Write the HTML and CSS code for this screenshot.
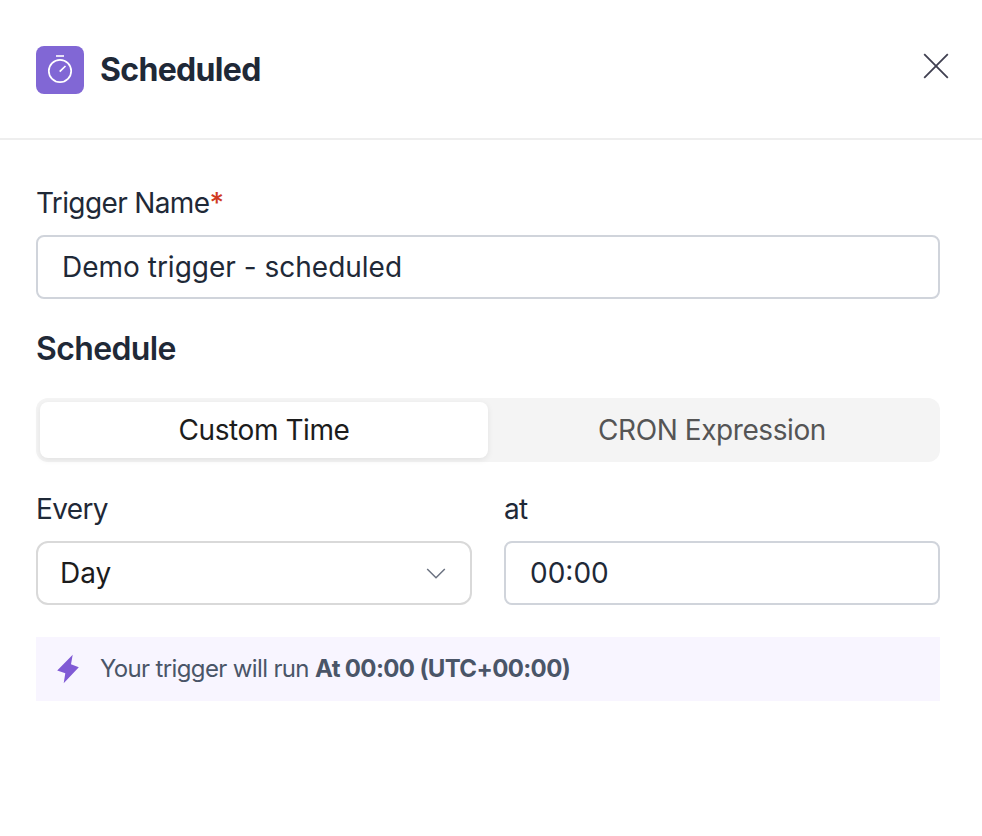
FILE: index.html
```html
<!DOCTYPE html>
<html lang="en">
<head>
    <meta charset="UTF-8">
    <meta name="viewport" content="width=device-width, initial-scale=1.0">
    <title>Scheduled</title>
    <link rel="stylesheet" href="styles.css">
</head>
<body>

    <header class="header">
        <div class="header-icon">
            <svg width="28" height="32" viewBox="0 0 28 32" fill="none" stroke="#fff">
                <path d="M10 4h8" stroke-width="2" opacity="0.8"/>
                <circle cx="14" cy="19" r="11.2" stroke-width="1.7"/>
                <path d="M13.7 19.7l5.8-5.7" stroke-width="1.7"/>
            </svg>
        </div>
        <h1>Scheduled</h1>
        <button class="close" aria-label="Close">
            <svg width="26" height="26" viewBox="0 0 26 26" fill="none" stroke="#3f3f50" stroke-width="1.8">
                <path d="M1.2 1.2l23.6 23.6M24.8 1.2L1.2 24.8"/>
            </svg>
        </button>
    </header>

    <main class="content">
        <label class="name-label" for="name">Trigger Name<span class="required">*</span></label>
        <input type="text" class="name-input" id="name" value="Demo trigger - scheduled">

        <h2>Schedule</h2>

        <div class="tabs">
            <button class="tab active">Custom Time</button>
            <button class="tab">CRON Expression</button>
        </div>

        <div class="row">
            <div class="field">
                <label>Every</label>
                <div class="select">
                    <span>Day</span>
                    <svg width="20" height="12" viewBox="0 0 20 12" fill="none" stroke="#6b7280" stroke-width="1.5">
                        <path d="M1.2 2l8.8 8.8L18.8 2"/>
                    </svg>
                </div>
            </div>
            <div class="field">
                <label for="time">at</label>
                <input type="text" class="time-input" id="time" value="00:00">
            </div>
        </div>

        <div class="notice">
            <svg width="24" height="30" viewBox="0 0 24 30" fill="#805ad5">
                <path d="M16.7 0.8L15 10.3l7.8 3L7.7 29.2l1.6-10L1.2 16.4z"/>
            </svg>
            <p>Your trigger will run <strong>At 00:00 (UTC+00:00)</strong></p>
        </div>
    </main>

</body>
</html>
```

FILE: styles.css
```css
* {
    box-sizing: border-box;
}

body {
    margin: 0;
    background: #fff;
    color: #1f2937;
    font-family: Inter, "Liberation Sans", sans-serif;
    font-size: 28px;
}

button {
    font: inherit;
    border: none;
    background: none;
    padding: 0;
    cursor: pointer;
}

svg {
    display: block;
}

.header {
    display: flex;
    align-items: center;
    height: 140px;
    padding: 0 33px 0 36px;
    border-bottom: 2px solid #eee;
}

.header-icon {
    display: flex;
    align-items: center;
    justify-content: center;
    width: 48px;
    height: 48px;
    margin-top: 2px;
    border-radius: 8px;
    background: #8167d5;
}

.header-icon svg {
    margin-bottom: 4px;
}

h1 {
    margin: 2px 0 0 16px;
    font-size: 32px;
    font-weight: 700;
    line-height: 48px;
    letter-spacing: -0.68px;
}

.close {
    margin: 0 0 6px auto;
}

.content {
    padding: 42px 42px 0 36px;
}

label {
    display: block;
    line-height: 42px;
    letter-spacing: -0.63px;
}

.required {
    color: #d03a22;
    font-weight: 500;
}

input[type="text"] {
    display: block;
    width: 100%;
    height: 64px;
    padding: 0 24px;
    border: 2px solid #d0d4db;
    border-radius: 8px;
    background: #fff;
    color: #1f2937;
    font: inherit;
    outline: none;
}

.name-input {
    margin-top: 11px;
}

h2 {
    margin: 26px 0 25px;
    font-size: 32px;
    font-weight: 600;
    line-height: 48px;
    letter-spacing: -0.64px;
}

.tabs {
    display: grid;
    grid-template-columns: 1fr 1fr;
    height: 64px;
    padding: 4px;
    border-radius: 12px;
    background: #f4f4f4;
}

.tab {
    border-radius: 8px;
    color: #555;
    letter-spacing: -0.42px;
}

.tab.active {
    background: #fff;
    color: #1c1c1c;
    box-shadow: 0 2px 6px rgba(0, 0, 0, 0.08);
}

.row {
    display: grid;
    grid-template-columns: 1fr 1fr;
    gap: 32px;
    margin-top: 26px;
}

.time-input {
    margin-top: 11px;
}

.select {
    display: flex;
    align-items: center;
    justify-content: space-between;
    height: 64px;
    margin-top: 11px;
    padding: 0 24px 0 22px;
    border: 2px solid #d9d9d9;
    border-radius: 12px;
    color: #1c1c1c;
}

.notice {
    display: flex;
    align-items: center;
    height: 64px;
    margin-top: 32px;
    padding-left: 20px;
    background: #f8f5ff;
    color: #4a5568;
    font-size: 24px;
}

.notice p {
    margin: 0 0 2px 20px;
    letter-spacing: -0.64px;
}

.notice strong {
    font-weight: 700;
}
```
